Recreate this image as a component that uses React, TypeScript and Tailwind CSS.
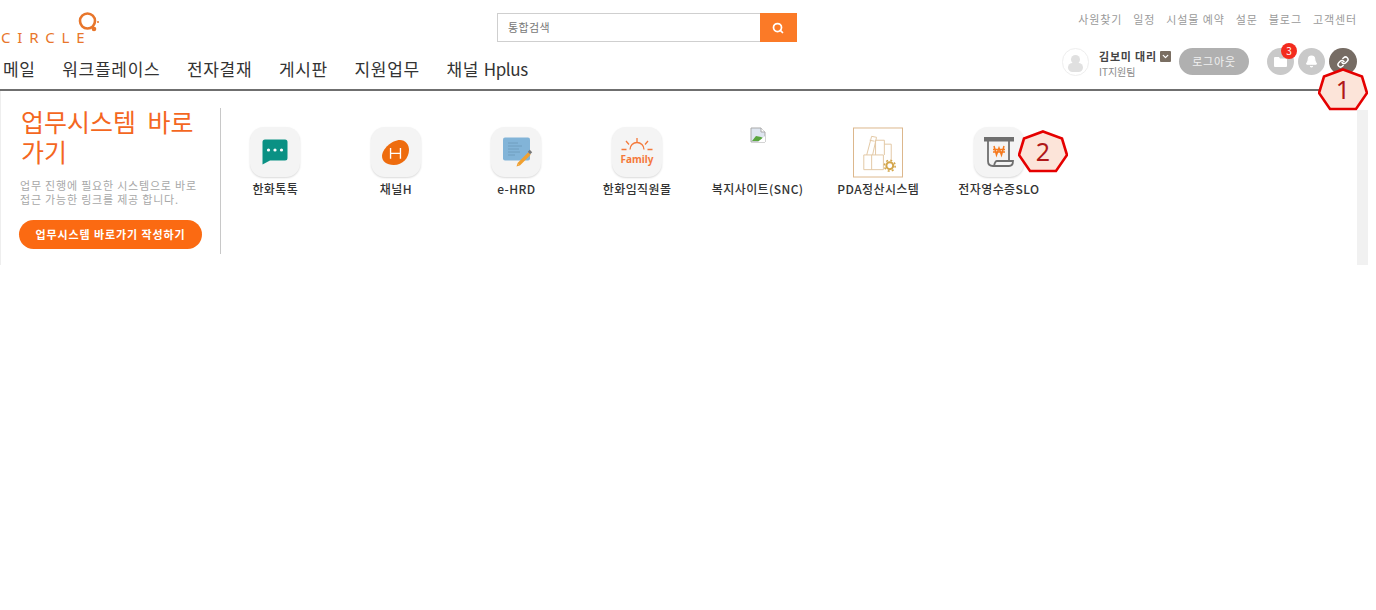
import React from 'react';
import { Search, Bell, Link, ChevronDown } from 'lucide-react';

const font = "font-['Noto_Sans_CJK_KR','Noto_Sans',sans-serif]";

const topLinks = ['사원찾기', '일정', '시설물 예약', '설문', '블로그', '고객센터'];
const navItems = ['메일', '워크플레이스', '전자결재', '게시판', '지원업무'];

function TalkIcon() {
  return (
    <svg width="26" height="26" viewBox="0 0 26 26">
      <path d="M3 0.5h20a2.5 2.5 0 0 1 2.5 2.5v16a2.5 2.5 0 0 1-2.5 2.5H8L0.5 25.5V3A2.5 2.5 0 0 1 3 0.5z" fill="#0a9184" />
      <circle cx="6.5" cy="11" r="1.6" fill="#fff" />
      <circle cx="13" cy="11" r="1.6" fill="#fff" />
      <circle cx="19.5" cy="11" r="1.6" fill="#fff" />
    </svg>
  );
}

function ChannelIcon() {
  return (
    <svg width="29" height="27" viewBox="0 0 32 30">
      <path d="M21 1c6 0 10 5 10 11 0 9-7 17-17 17C6 29 1 25 1 19 1 11 12 1 21 1z" fill="#ee6c0e" />
      <path d="M10.5 10v12M21.5 10v12M10.5 16h11" stroke="#fff" strokeWidth="1.5" fill="none" />
    </svg>
  );
}

function HrdIcon() {
  return (
    <svg width="31" height="30" viewBox="0 0 31 30" className="ml-[4px]">
      <rect x="0" y="0.5" width="27" height="23" rx="2" fill="#82b4d8" />
      <path d="M5 6h10M5 9h14M5 12h11M5 15h12M5 18h7" stroke="#6d9cbd" strokeWidth="0.9" />
      <path d="M15.5 27.5L26.5 16.5" stroke="#f0a030" strokeWidth="3.4" />
      <path d="M26 16l2-2" stroke="#777" strokeWidth="3.4" />
      <path d="M13.5 29.5l1-3 2 2z" fill="#f0a030" />
    </svg>
  );
}

function FamilyIcon() {
  return (
    <svg width="40" height="28" viewBox="-3.5 0 40 28">
      <path d="M9.5 11.5a7 7 0 0 1 14 0" stroke="#f4793a" strokeWidth="1.3" fill="none" />
      <path d="M16.5 0v4.5M5.5 3l3 3.5M27.5 3l-3 3.5M1 11.5h5M27 11.5h5" stroke="#f4793a" strokeWidth="1.3" />
      <text x="16.5" y="25" textAnchor="middle" fontSize="10" fontWeight="700" fontFamily="Noto Sans" fill="#f4793a">Family</text>
    </svg>
  );
}

function BrokenImage() {
  return (
    <svg width="16" height="16" viewBox="0 0 16 16">
      <path d="M1 1h10l4 4v10H1z" fill="#dfe6f0" stroke="#a9a9a9" />
      <path d="M11 1v4h4" fill="#fff" stroke="#a9a9a9" />
      <path d="M2 14l4-5 5 1 2 1-4 3z" fill="#5aa63f" />
      <path d="M8 15l7-6v6z" fill="#fff" />
    </svg>
  );
}

function PdaIcon() {
  return (
    <svg width="51" height="51" viewBox="0 0 51 51">
      <rect x="0.5" y="0.5" width="50" height="50" fill="#fff" stroke="#dcb68a" />
      <g fill="none" stroke="#e2c8a4" strokeWidth="1">
        <path d="M11 28h20v15H11zM19 28v15" />
        <path d="M14 28l5-19 5 1-4 18M17 13l5 1" />
        <path d="M23 28V13h9v15M32 17h7v16" />
      </g>
      <circle cx="37.5" cy="39" r="3.5" fill="none" stroke="#d3a54a" strokeWidth="2" />
      <circle cx="37.5" cy="39" r="5.5" fill="none" stroke="#d3a54a" strokeWidth="1.6" strokeDasharray="2 2.3" />
    </svg>
  );
}

function ReceiptIcon() {
  return (
    <svg width="30" height="30" viewBox="0 0 30 30">
      <path d="M0 0h30v4.5H0z" fill="#6f6f6f" />
      <path d="M4 4v20q0 5 5 5h16q4 0 4-5H13q-2 0-3 5M25 4v20" fill="none" stroke="#6f6f6f" strokeWidth="1.8" />
      <path d="M10 9l2.5 9 2.5-7 2.500 7L20 9M9 12.500h12M9 15h12" fill="none" stroke="#f57a1f" strokeWidth="1.5" />
    </svg>
  );
}

const shortcuts = [
  { label: '한화톡톡', icon: <TalkIcon />, tile: true },
  { label: '채널H', icon: <ChannelIcon />, tile: true },
  { label: 'e-HRD', icon: <HrdIcon />, tile: true },
  { label: '한화임직원몰', icon: <FamilyIcon />, tile: true },
  { label: '복지사이트(SNC)', icon: <BrokenImage />, tile: false },
  { label: 'PDA정산시스템', icon: <PdaIcon />, tile: false },
  { label: '전자영수증SLO', icon: <ReceiptIcon />, tile: true },
];

function Callout({ n, className }: { n: number; className: string }) {
  return (
    <div className={`absolute w-[50px] h-[43px] ${className}`}>
      <svg width="50" height="43" viewBox="0 0 50 43" className="absolute inset-0">
        <polygon points="25,1.500 44,8.500 49,25 38,41 12,41 1,25 6,8.500" fill="#fce4d9" stroke="#e50000" strokeWidth="2.600" />
      </svg>
      <span className="absolute inset-0 flex items-center justify-center text-[25px] text-[#b01818] font-['Noto_Sans',sans-serif]">{n}</span>
    </div>
  );
}

export default function App() {
  return (
    <div className={`relative w-[1376px] h-[610px] bg-white overflow-hidden ${font}`}>
      <header className="h-[91px] w-[1357px] border-b-2 border-[#6f6f6f] flex flex-col">
        <div className="flex h-[50px] items-start">
          <div className="relative w-[497px] h-[50px] shrink-0">
            <span className="absolute left-[1px] top-[28px] text-[15px] leading-[18px] tracking-[6.8px] text-[#e8762b] font-['Noto_Sans',sans-serif]">CIRCLE</span>
            <svg width="26" height="24" viewBox="0 0 26 24" className="absolute left-[77px] top-[11px]">
              <circle cx="10.500" cy="10" r="7.500" fill="none" stroke="#e8762b" strokeWidth="2.600" />
              <circle cx="17" cy="18" r="2.300" fill="#e8762b" />
              <circle cx="21" cy="11" r="1" fill="#e8762b" />
            </svg>
          </div>
          <div className="mt-[13px] w-[300px] h-[29px] flex border border-[#cfcfcf] bg-white">
            <div className="flex-1 pl-[10px] text-[11px] leading-[27px] tracking-[0.4px] text-[#777]">통합검색</div>
            <div className="w-[37px] -my-px -mr-px bg-[#fb7a27] flex items-center justify-center">
              <Search size={12} strokeWidth={3.5} color="#fff" className="-ml-px" />
            </div>
          </div>
          <div className="flex-1 flex justify-end gap-[11px] pt-[12px] text-[11px] leading-[15px] tracking-[0.9px] text-[#9a9a9a]">
            {topLinks.map((t) => (
              <span key={t}>{t}</span>
            ))}
          </div>
        </div>
        <div className="flex-1 flex items-start">
          <nav className="flex gap-[26.6px] pl-[3px] text-[17px] leading-[24px] tracking-[0.7px] pt-[7px] text-[#333]">
            {navItems.map((t) => (
              <span key={t}>{t}</span>
            ))}
            <span>
              채널 <span className="tracking-[-0.4px]">Hplus</span>
            </span>
          </nav>
          <div className="ml-auto flex items-start">
            <div className="w-[27px] h-[28px] mt-[-2px] rounded-full border border-[#eeeeee] bg-white flex flex-col items-center justify-end overflow-hidden">
              <div className="w-[9px] h-[9px] rounded-full bg-[#e0e0e0]" />
              <div className="w-[15px] h-[9px] rounded-full bg-[#e0e0e0] mb-[3px] -mt-px" />
            </div>
            <div className="ml-[10px] mt-[-2px] w-[80px]">
              <div className="flex items-center gap-[3px] text-[11px] leading-[16px] font-bold tracking-[0.8px] text-[#444]">
                김보미 대리
                <span className="w-[11px] h-[11px] rounded-[1px] bg-[#7a6e62] flex items-center justify-center">
                  <ChevronDown size={9} strokeWidth={3.5} color="#fff" />
                </span>
              </div>
              <div className="text-[10px] leading-[14px] text-[#888] mt-px">IT지원팀</div>
            </div>
            <button className="w-[70px] h-[27px] mt-[-2px] rounded-full bg-[#b0b0b0] text-[#f0f0f0] text-[11px] tracking-[0.8px]">로그아웃</button>
            <div className="relative ml-[18px] mt-[-2px] w-[27px] h-[27px] rounded-full bg-[#c9c9c9] flex items-center justify-center">
              <svg width="13" height="11" viewBox="0 0 13 11">
                <path d="M0 2a1 1 0 0 1 1-1h4l1 1.500h6a1 1 0 0 1 1 1V10a1 1 0 0 1-1 1H1a1 1 0 0 1-1-1z" fill="#fff" />
              </svg>
              <span className="absolute -top-[5px] right-[-3px] w-[16px] h-[16px] rounded-full bg-[#f32b1e] text-white text-[10px] leading-[16px] text-center">3</span>
            </div>
            <div className="ml-[4px] mt-[-2px] w-[27px] h-[27px] rounded-full bg-[#c9c9c9] flex items-center justify-center">
              <Bell size={13} color="#fff" fill="#fff" />
            </div>
            <div className="ml-[4px] mt-[-2px] w-[28px] h-[27px] rounded-full bg-[#766c64] flex items-center justify-center">
              <Link size={12} strokeWidth={3} color="#fff" />
            </div>
          </div>
        </div>
      </header>

      <div className="flex h-[174px] w-[1368px] border-l border-[#eeeeee]">
        <div className="w-[220px] mt-[17px] h-[146px] border-r border-[#c8c8c8] shrink-0 pl-[18px]">
          <h2 className="w-[186px] -mt-[2px] text-[25px] leading-[30px] [word-spacing:6px] text-[#f4671f] pl-[2px]">업무시스템 바로가기</h2>
          <p className="mt-[12px] pl-px whitespace-nowrap text-[11px] leading-[14px] tracking-[0.8px] text-[#a8a8a8]">
            업무 진행에 필요한 시스템으로 바로
            <br />
            접근 가능한 링크를 제공 합니다.
          </p>
          <button className="mt-[14px] w-[183px] h-[29px] rounded-full bg-[#fb6a12] text-white text-[11px] font-bold tracking-[0.9px]">
            업무시스템 바로가기 작성하기
          </button>
        </div>
        <div className="flex-1 flex items-start pt-[36px]">
          {shortcuts.map((s) => (
            <div key={s.label} className="w-[120.6px] flex flex-col items-center shrink-0 first:ml-[-6px]">
              <div
                className={
                  s.tile
                    ? 'w-[50px] h-[50px] rounded-[14px] bg-[#f4f4f4] shadow-[0_1px_2px_rgba(0,0,0,0.15)] flex items-center justify-center'
                    : 'w-[50px] h-[50px] flex items-start justify-center'
                }
              >
                {s.icon}
              </div>
              <div className="mt-[3px] text-[12px] leading-[17px] tracking-[0.4px] font-medium text-[#333] whitespace-nowrap">{s.label}</div>
            </div>
          ))}
        </div>
        <div className="w-[11px] mt-[19px] bg-[#f1f1f1] shrink-0" />
      </div>

      <Callout n={1} className="left-[1318px] top-[68px]" />
      <Callout n={2} className="left-[1018px] top-[130px]" />
    </div>
  );
}
